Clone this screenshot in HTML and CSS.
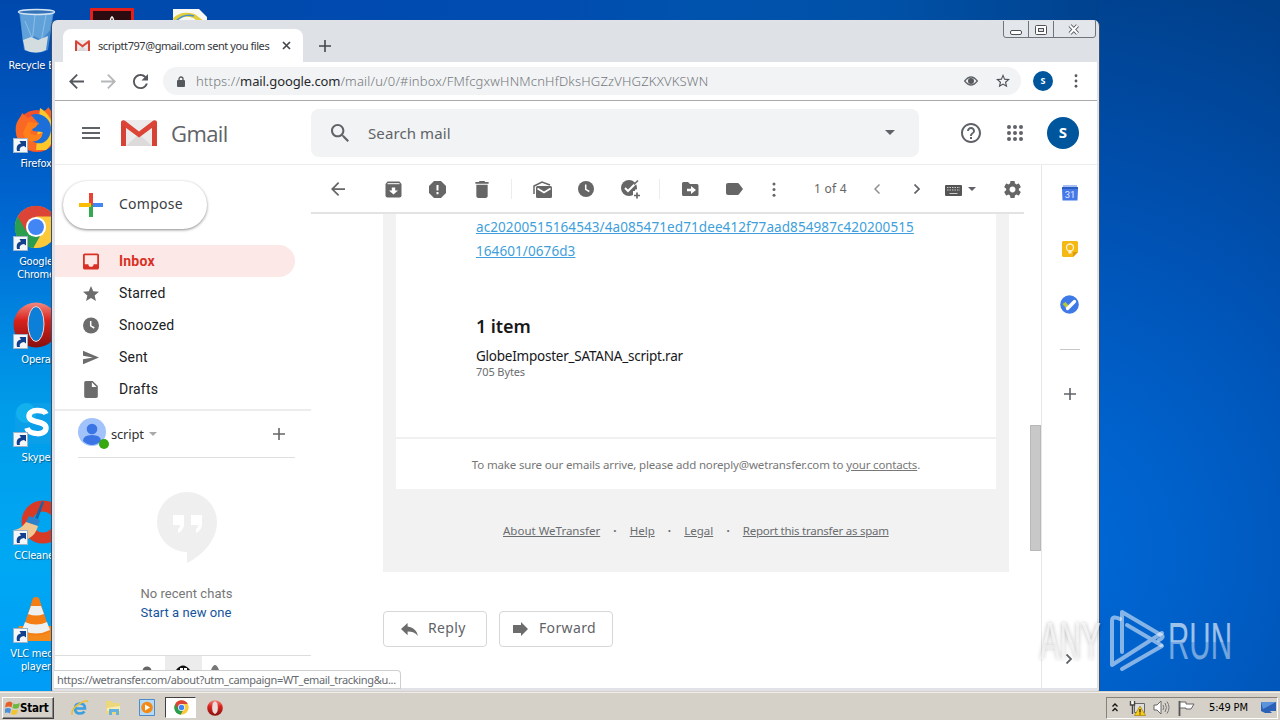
FILE: index.html
```html
<!DOCTYPE html>
<html lang="en">
<head>
<meta charset="utf-8">
<title>Gmail</title>
<link rel="stylesheet" href="styles.css">
</head>
<body>
<svg class="defs" width="0" height="0">
  <symbol id="shortcut" viewBox="0 0 15 15"><rect x=".5" y=".5" width="14" height="14" fill="#f4f7fa" stroke="#9fb3c8"/><path d="M4 13C3 8 5 6 8 5.500L6.500 3H13v6.500L11 8C8 8.500 6 10 7 13z" fill="#12408c"/></symbol>
  <symbol id="chrome" viewBox="0 0 48 48"><circle cx="24" cy="24" r="23" fill="#fbc93a"/><path d="M24 24L4 12.500A23 23 0 0 0 21 47l9-16z" fill="#2a9d4e"/><path d="M4 12.500A23 23 0 0 1 44 12.500H24l-10 17z" fill="#db4437"/><circle cx="24" cy="24" r="11" fill="#fff"/><circle cx="24" cy="24" r="8.700" fill="#4285f4"/></symbol>
  <symbol id="gmail" viewBox="0 0 36 26"><rect width="36" height="26" rx="2" fill="#eceaea"/><path d="M5 26L18 14l13 12z" fill="#dcdada"/><path d="M0 26V2l5 4v20zM36 26V2l-5 4v20z" fill="#d44336"/><path d="M0 2.500C0 .5 2.500-.5 4 .8L18 11.500 32 .8c1.500-1.300 4-.3 4 1.700 0 1-.5 2-1.500 2.700L18 17.500 1.500 5.200C.5 4.500 0 3.500 0 2.500z" fill="#db4437"/></symbol>
  <symbol id="clock" viewBox="0 0 16 16"><circle cx="8" cy="8" r="8" fill="currentColor"/><path d="M7.700 3.500v4.800l3.600 2.200" fill="none" stroke="#fff" stroke-width="1.500"/></symbol>
  <symbol id="plus" viewBox="0 0 12 12"><path d="M6 0v12M0 6h12" stroke="currentColor" stroke-width="1.600"/></symbol>
  <symbol id="back" viewBox="4 4 16 16"><path d="M20 11H7.830l5.590-5.590L12 4l-8 8 8 8 1.410-1.410L7.830 13H20z" fill="currentColor"/></symbol>
  <symbol id="more" viewBox="0 0 4 16"><g fill="currentColor"><circle cx="2" cy="2" r="1.600"/><circle cx="2" cy="8" r="1.600"/><circle cx="2" cy="14" r="1.600"/></g></symbol>
  <symbol id="opera" viewBox="0 0 46 46"><circle cx="23" cy="23" r="22.500" fill="url(#redball)"/><ellipse cx="23" cy="22" rx="8" ry="17.500" fill="var(--hole)" stroke="#f6d5d2" stroke-width="1"/></symbol>
  <linearGradient id="redball" x2="0" y2="1"><stop stop-color="#f08a80"/><stop offset=".4" stop-color="#d8221c"/><stop offset="1" stop-color="#86100e"/></linearGradient>
</svg>

<div class="desktop">
  <div class="shortcut-icon" style="top:7px">
    <svg width="42" height="48" viewBox="0 0 42 48"><path d="M4 4l5 39q12 6 24 0L39 4z" fill="#3f86cf"/><path d="M5 5h33l-3 18-8 10-8-4-11 6z" fill="#6ea9de" opacity=".75"/><path d="M10 14l9 22M20 8l-3 28M31 8l-5 27" stroke="#b9daf2" opacity=".5"/><path d="M8 33l8-3 7 3 10-4-2 14q-10 5-21 0z" fill="#d3dde0"/><ellipse cx="21.500" cy="5" rx="18" ry="2.500" fill="#3472b8" stroke="#d3e5f2" stroke-width="1.400"/></svg>
    <span>Recycle Bin</span>
  </div>
  <div class="shortcut-icon" style="top:105px">
    <svg width="44" height="48" viewBox="0 0 44 48"><circle cx="23" cy="26" r="21" fill="#f2512b"/><path d="M2 28C0 16 8 12 8 8l6 5C22 8 34 6 34 2c10 10 12 36-4 43-14 4-26-4-28-17z" fill="#fa6826"/><path d="M26 3c14 8 20 30 6 42H22z" fill="#ffc82a"/><path d="M17 10c10-4 21 4 20 15S27 42 18 36c8 0 11-5 10-9l-9-1c-2-3 2-5 6-7z" fill="#1c6fd8"/><path d="M14 17l9 1c1 3-2 5-5 6l-2 4c4 4 9 1 13-1-2 12-18 13-20 1z" fill="#ff7f1a"/></svg>
    <svg class="overlay-arrow"><use href="#shortcut"/></svg><span>Firefox</span>
  </div>
  <div class="shortcut-icon" style="top:203px">
    <svg width="44" height="48"><use href="#chrome" y="2" width="44" height="44"/></svg>
    <svg class="overlay-arrow"><use href="#shortcut"/></svg><span>Google Chrome</span>
  </div>
  <div class="shortcut-icon" style="top:301px">
    <svg width="46" height="48"><use href="#opera" y="1" width="46" height="46"/></svg>
    <svg class="overlay-arrow"><use href="#shortcut"/></svg><span>Opera</span>
  </div>
  <div class="shortcut-icon skype" style="top:399px">
    <svg width="44" height="48" viewBox="0 0 44 48"><rect x="1" y="4" width="44" height="41" rx="12" fill="#0b9fea"/><circle cx="12" cy="14" r="10" fill="#13b0ee"/><path d="M32 15c-2-5-17-5-17 2 0 8 17 4 17 12 0 8-17 7-19 0" fill="none" stroke="#fff" stroke-width="5.500"/></svg>
    <svg class="overlay-arrow"><use href="#shortcut"/></svg><span>Skype</span>
  </div>
  <div class="shortcut-icon" style="top:497px">
    <svg width="44" height="48" viewBox="0 0 44 48"><circle cx="29" cy="25" r="16" fill="none" stroke="#d83b25" stroke-width="11"/><path d="M28 4l2 1-6 17-3-1z" fill="#1763ab"/><path d="M15 19l11 4-2 6-12-4z" fill="#2b82cb"/><path d="M12 25l12 4c-2 8-7 12-13 14L0 33c6-1 9-4 12-8z" fill="#f0c792"/></svg>
    <svg class="overlay-arrow"><use href="#shortcut"/></svg><span>CCleaner</span>
  </div>
  <div class="shortcut-icon" style="top:595px">
    <svg width="44" height="48" viewBox="0 0 44 48"><path d="M5 31h34l5 15H1z" fill="#f58a1c"/><path d="M19 3q3-2 6 0l11 34q-14 7-28 0z" fill="#f47d14"/><path d="M17 11h10l3 8q-8 3-16 0zM11 27q11 5 22 0l3 8q-14 7-28 0z" fill="#eef0ef"/></svg>
    <svg class="overlay-arrow"><use href="#shortcut"/></svg><span>VLC media player</span>
  </div>
  <svg class="peek-icons" width="120" height="14" viewBox="0 0 120 14"><rect x="1.500" y="1.500" width="41" height="20" fill="#2c0b10" stroke="#e3211c" stroke-width="3"/><path d="M20 14q1-5 2-5t2 5" fill="none" stroke="#fff" stroke-width="1.500"/><path d="M83 1h26l8 8v5H83z" fill="#f8f8f4"/><path d="M84 12q8-8 20-4l8 6" fill="none" stroke="#e0ce3d" stroke-width="4"/><path d="M86 13q8-8 18-5" fill="none" stroke="#4d8fcb" stroke-width="1.500"/></svg>

  <main class="window">
    <div class="tabstrip">
      <div class="tab">
        <svg class="fav"><use href="#gmail"/></svg>
        <span class="tab-title">scriptt797@gmail.com sent you files</span>
        <svg class="tab-close" width="9" height="9" viewBox="0 0 9 9"><path d="M1 1l7 7M8 1L1 8" stroke="#45494d" stroke-width="1.700"/></svg>
      </div>
      <svg class="new-tab"><use href="#plus"/></svg>
      <svg class="caption" width="94" height="18" viewBox="0 0 94 18"><path d="M.5 0v14q0 2.500 2.500 2.500h87q2.500 0 2.500-2.500V0M25.500 0v16.500M50.500 0v16.500" fill="#e3e6ea" stroke="#70757b"/><rect x="7.500" y="9.500" width="11" height="4" rx="1.500" fill="#fff" stroke="#4d5156"/><rect x="32.500" y="4.500" width="11" height="9" rx="1" fill="#fff" stroke="#4d5156"/><rect x="35.500" y="7.500" width="5" height="3" fill="#ddd" stroke="#4d5156"/><path d="M67 4.500l7.500 8M74.500 4.500l-7.500 8" stroke="#565a60" stroke-width="4"/><path d="M67 4.500l7.500 8M74.500 4.500l-7.500 8" stroke="#fff" stroke-width="2"/></svg>
    </div>
    <div class="browser-bar">
      <svg class="nav"><use href="#back"/></svg>
      <svg class="nav forward"><use href="#back"/></svg>
      <svg class="nav" viewBox="4 4 16 16"><path d="M17.650 6.350C16.200 4.900 14.210 4 12 4c-4.420 0-7.990 3.580-7.990 8s3.570 8 7.990 8c3.730 0 6.840-2.550 7.730-6h-2.080c-.82 2.330-3.040 4-5.650 4-3.310 0-6-2.690-6-6s2.690-6 6-6c1.660 0 3.140.69 4.220 1.780L13 11h7V4l-2.350 2.350z" fill="currentColor"/></svg>
      <div class="omnibox">
        <svg width="8" height="11" viewBox="0 0 8 11"><rect y="4" width="8" height="7" rx="1" fill="#55595e"/><path d="M2 5V3a2 2 0 0 1 4 0v2" fill="none" stroke="#55595e" stroke-width="1.300"/></svg>
        <span class="url">https://<b>mail.google.com</b>/mail/u/0/#inbox/FMfcgxwHNMcnHfDksHGZzVHGZKXVKSWN</span>
        <svg class="eye" width="14" height="10" viewBox="0 0 14 10"><path d="M.7 5Q7-3 13.300 5 7 13 .7 5z" fill="none" stroke="#5f6368" stroke-width="1.400"/><circle cx="7" cy="5" r="3" fill="#55595e"/></svg>
        <svg width="14" height="14" viewBox="2 2 20 20"><path d="M22 9.240l-7.190-.62L12 2 9.190 8.630 2 9.240l5.460 4.730L5.820 21 12 17.270 18.180 21l-1.630-7.030L22 9.240zM12 15.400l-3.760 2.270 1-4.280-3.320-2.880 4.380-.38L12 6.100l1.710 4.040 4.380.38-3.320 2.880 1 4.280L12 15.400z" fill="#4d5156"/></svg>
      </div>
      <div class="avatar small">s</div>
      <svg class="browser-menu"><use href="#more"/></svg>
    </div>

    <header class="gmail-head">
      <svg class="burger" width="18" height="12" viewBox="0 0 18 12"><path d="M0 1h18M0 6h18M0 11h18" stroke="#5f6368" stroke-width="1.800"/></svg>
      <svg class="logo"><use href="#gmail"/></svg>
      <span class="brand">Gmail</span>
      <div class="search">
        <svg width="18" height="18" viewBox="3 3 17.500 17.500"><path d="M15.500 14h-.79l-.28-.27C15.410 12.590 16 11.110 16 9.500 16 5.910 13.090 3 9.500 3S3 5.910 3 9.500 5.910 16 9.500 16c1.610 0 3.090-.59 4.230-1.570l.27.28v.79l5 4.990L20.490 19l-4.990-5zm-6 0C7.010 14 5 11.990 5 9.500S7.010 5 9.500 5 14 7.010 14 9.500 11.990 14 9.500 14z" fill="#5f6368"/></svg>
        <span>Search mail</span>
        <i class="caret"></i>
      </div>
      <svg class="help" width="20" height="20" viewBox="2 2 20 20"><path d="M11 18h2v-2h-2v2zm1-16C6.480 2 2 6.480 2 12s4.480 10 10 10 10-4.480 10-10S17.520 2 12 2zm0 18c-4.410 0-8-3.590-8-8s3.590-8 8-8 8 3.590 8 8-3.590 8-8 8zm0-14c-2.210 0-4 1.790-4 4h2c0-1.100.9-2 2-2s2 .9 2 2c0 2-3 1.750-3 5h2c0-2.250 3-2.500 3-5 0-2.210-1.790-4-4-4z" fill="#5f6368"/></svg>
      <svg class="apps" width="16" height="16" viewBox="0 0 16 16"><g fill="#5f6368"><circle cx="2" cy="2" r="2"/><circle cx="8" cy="2" r="2"/><circle cx="14" cy="2" r="2"/><circle cx="2" cy="8" r="2"/><circle cx="8" cy="8" r="2"/><circle cx="14" cy="8" r="2"/><circle cx="2" cy="14" r="2"/><circle cx="8" cy="14" r="2"/><circle cx="14" cy="14" r="2"/></g></svg>
      <div class="avatar">s</div>
    </header>

    <div class="gmail-body">
      <nav class="sidebar">
        <div class="compose">
          <svg width="24" height="24" viewBox="0 0 24 24"><path d="M10 0h4v12h-4z" fill="#ea4335"/><path d="M10 12h4v12h-4z" fill="#34a853"/><path d="M0 10h12v4H0z" fill="#fbbc04"/><path d="M14 10h10v4H14z" fill="#4285f4"/></svg>
          <span>Compose</span>
        </div>
        <ul class="folders">
          <li class="active"><svg viewBox="3 3 18 18"><path d="M19 3H4.990c-1.110 0-1.980.89-1.980 2L3 19c0 1.100.88 2 1.990 2H19c1.100 0 2-.9 2-2V5c0-1.110-.9-2-2-2zm0 12h-4c0 1.660-1.350 3-3 3s-3-1.340-3-3H4.990V5H19v10z" fill="currentColor"/></svg><span>Inbox</span></li>
          <li><svg viewBox="2 2 20 19"><path d="M12 17.270L18.180 21l-1.640-7.030L22 9.240l-7.190-.61L12 2 9.190 8.630 2 9.240l5.460 4.730L5.820 21z" fill="currentColor"/></svg><span>Starred</span></li>
          <li><svg><use href="#clock"/></svg><span>Snoozed</span></li>
          <li><svg viewBox="2 3 21 18"><path d="M2.010 21L23 12 2.010 3 2 9.800l13 2.200-13 2.200z" fill="currentColor"/></svg><span>Sent</span></li>
          <li><svg viewBox="4 2 16 20"><path d="M6 2c-1.100 0-1.990.9-1.990 2L4 20c0 1.100.89 2 1.990 2H18c1.100 0 2-.9 2-2V8l-6-6H6zm7 7V3.500L18.500 9H13z" fill="currentColor"/></svg><span>Drafts</span></li>
        </ul>
        <div class="chat-user">
          <svg width="32" height="32" viewBox="0 0 32 32"><circle cx="14" cy="14" r="14" fill="#a1c2fa"/><circle cx="14" cy="11" r="5.300" fill="#3b74e4"/><path d="M5 23q0-6 9-6t9 6q-9 8-18 0z" fill="#3b74e4"/><circle cx="26" cy="26" r="5" fill="#34a80e"/></svg>
          <span>script</span><i class="caret grey"></i>
          <svg class="add"><use href="#plus"/></svg>
        </div>
        <div class="hangouts">
          <svg width="60" height="72" viewBox="0 0 60 72"><path d="M30 0a30 30 0 0 1 30 30c0 18-14 33-30 41V60A30 30 0 0 1 30 0z" fill="#efefef"/><path d="M16 23h11v10q-1 6-6 8v-4q2-1 2-4h-7zM34 23h11v10q-1 6-6 8v-4q2-1 2-4h-7z" fill="#fff"/></svg>
          <span class="none">No recent chats</span>
          <span class="start-chat">Start a new one</span>
        </div>
        <div class="side-tabs">
          <svg width="36" height="14"><circle cx="18" cy="15" r="4.500" fill="#666"/></svg>
          <svg class="current" width="37" height="14"><path d="M11 14q7-9 14 0z" fill="#111"/><path d="M15 14v-2h3v2zm4 0v-2h3v2z" fill="#fff"/></svg>
          <svg width="26" height="14"><path d="M9 14q4-10 8 0z" fill="#777"/></svg>
        </div>
      </nav>

      <section class="mail">
        <div class="mail-tools">
          <svg class="t-back" width="14" height="14"><use href="#back"/></svg>
          <svg class="t-archive" width="17" height="17" viewBox="0 0 17 17"><path d="M2.500.5h12l2 2.500v11.500q0 2-2 2h-12q-2 0-2-2V3z" fill="currentColor"/><path d="M2.500 2.700h12" stroke="#fff"/><path d="M6.800 6.500h3.400v3H13L8.500 13.500 4 9.500h2.800z" fill="#fff"/></svg>
          <svg class="t-spam" width="17" height="17" viewBox="0 0 17 17"><path d="M5 0h7l5 5v7l-5 5H5l-5-5V5z" fill="currentColor"/><path d="M8.500 4v5.500M8.500 11v2.200" stroke="#fff" stroke-width="2"/></svg>
          <svg class="t-trash" width="14" height="17" viewBox="5 3 14 18"><path d="M6 19c0 1.100.9 2 2 2h8c1.100 0 2-.9 2-2V7H6v12zM19 4h-3.500l-1-1h-5l-1 1H5v2h14V4z" fill="currentColor"/></svg>
          <i class="sep"></i>
          <svg class="t-unread" width="19" height="17" viewBox="0 0 19 17"><path d="M1 13V5l8-4 8 3" fill="none" stroke="currentColor" stroke-width="1.500"/><rect x="3" y="5" width="16" height="12" rx="1.500" fill="currentColor"/><path d="M4.500 7.500l6.500 4 6.500-4" fill="none" stroke="#fff" stroke-width="1.700"/></svg>
          <svg class="t-snooze" width="16" height="16"><use href="#clock"/></svg>
          <svg class="t-task" width="20" height="19" viewBox="0 0 20 19"><circle cx="8" cy="8" r="8" fill="currentColor"/><path d="M4 8l3 3 9-9" fill="none" stroke="#fff" stroke-width="2"/><path d="M13 4.500L17 .5" stroke="currentColor" stroke-width="1.500"/><path d="M12 13h8M16 9.500v9" stroke="#fff" stroke-width="4"/><path d="M13 15.500h6M16 12.500v6" stroke="currentColor" stroke-width="1.700"/></svg>
          <i class="sep"></i>
          <svg class="t-move" width="17" height="14" viewBox="0 0 17 14"><path d="M1.500 0H6l2 2h7q1.500 0 1.500 1.500v9Q16.500 14 15 14H1.500Q0 14 0 12.500v-11Q0 0 1.500 0z" fill="currentColor"/><path d="M5 6.700h4V4l5 4-5 4V9.300H5z" fill="#fff"/></svg>
          <svg class="t-label" width="17" height="12" viewBox="0 0 17 12"><path d="M2 0h9.500q1 0 1.500.8L17 6l-4 5.200q-.5.800-1.500.800H2q-2 0-2-2V2q0-2 2-2z" fill="currentColor"/></svg>
          <svg class="t-more" width="4" height="15"><use href="#more"/></svg>
          <span class="count">1 of 4</span>
          <svg class="t-prev" width="6" height="10" viewBox="0 0 6 10"><path d="M5.500.5L1 5l4.500 4.500" fill="none" stroke="#8d8f91" stroke-width="1.500"/></svg>
          <svg class="t-next" width="6" height="10" viewBox="0 0 6 10"><path d="M.5.500L5 5 .5 9.500" fill="none" stroke="#5f6368" stroke-width="1.700"/></svg>
          <svg class="t-keys" width="17" height="11" viewBox="0 0 17 11"><rect width="17" height="11" rx="1" fill="#555"/><path d="M2 2.500h13M2 5h13" stroke="#ccc" stroke-width="1" stroke-dasharray="1.500 1"/><path d="M4.500 8.500h8" stroke="#ccc"/></svg>
          <i class="caret keys"></i>
          <svg class="t-gear" width="17" height="17" viewBox="2 2 20 20"><path d="M19.430 12.980c.04-.32.07-.64.07-.98s-.03-.66-.07-.98l2.110-1.650c.19-.15.24-.42.12-.64l-2-3.460c-.12-.22-.39-.3-.61-.22l-2.490 1c-.52-.4-1.080-.73-1.690-.98l-.38-2.650C14.460 2.180 14.250 2 14 2h-4c-.25 0-.46.18-.49.42l-.38 2.650c-.61.25-1.170.59-1.690.98l-2.490-1c-.23-.09-.49 0-.61.22l-2 3.460c-.13.22-.07.49.12.64l2.110 1.650c-.04.32-.07.65-.07.98s.03.66.07.98l-2.110 1.650c-.19.15-.24.42-.12.64l2 3.460c.12.22.39.3.61.22l2.490-1c.52.4 1.080.73 1.690.98l.38 2.650c.03.24.24.42.49.42h4c.25 0 .46-.18.49-.42l.38-2.650c.61-.25 1.170-.59 1.690-.98l2.490 1c.23.09.49 0 .61-.22l2-3.460c.12-.22.07-.49-.12-.64l-2.110-1.650zM12 15.500c-1.930 0-3.500-1.570-3.500-3.500s1.570-3.500 3.500-3.500 3.500 1.570 3.500 3.500-1.570 3.500-3.500 3.500z" fill="currentColor"/></svg>
        </div>
        <div class="scroller">
          <div class="message">
            <div class="panel">
              <div class="card">
                <div class="link"><a class="l1">ac20200515164543/4a085471ed71dee412f77aad854987c420200515</a><br><a class="l2">164601/0676d3</a></div>
                <h2>1 item</h2>
                <p class="file">GlobeImposter_SATANA_script.rar</p>
                <p class="size">705 Bytes</p>
              </div>
              <p class="note"><span>To make sure our emails arrive, please add noreply@wetransfer.com to <u>your contacts</u>.</span></p>
              <div class="foot"><u class="f1">About WeTransfer</u><b>·</b><u class="f2">Help</u><b>·</b><u class="f3">Legal</u><b>·</b><u class="f4">Report this transfer as spam</u></div>
            </div>
            <div class="actions">
              <div class="btn reply"><svg width="17" height="13" viewBox="3 5 18 15" preserveAspectRatio="none"><path d="M10 9V5l-7 7 7 7v-4.100c5 0 8.500 1.600 11 5.100-1-5-4-10-11-11z" fill="#6c6c6c"/></svg><span>Reply</span></div>
              <div class="btn fwd"><svg width="15" height="14" viewBox="0 0 15 14"><path d="M0 3h8V0l7 7-7 7v-3H0z" fill="#6c6c6c"/></svg><span>Forward</span></div>
            </div>
          </div>
          <div class="track"><div class="thumb"></div></div>
        </div>
      </section>

      <aside class="rail">
        <svg width="16" height="18" viewBox="0 0 16 18"><path d="M1 1h14v6H1z" fill="#a7c1f7"/><path d="M0 3h16v3H0z" fill="#2f5cc0"/><path d="M0 5h16l-.5 11.500h-15z" fill="#4679e8"/><text x="8" y="14" text-anchor="middle" font-size="9.500" fill="#e3ecff" font-family="Roboto">31</text></svg>
        <svg class="keep" width="16" height="16" viewBox="0 0 16 16"><path d="M1 0h14l1 1v10l-5 5H1l-1-1V1z" fill="#f4b915"/><path d="M16 11l-5 5v-5z" fill="#e09a0c"/><circle cx="8" cy="6.500" r="3.500" fill="none" stroke="#fff3d2" stroke-width="1.300"/><path d="M6.500 9v3.500h3V9" fill="#fff3d2"/></svg>
        <svg class="tasks" width="19" height="19" viewBox="0 0 19 19"><circle cx="9.500" cy="9.500" r="9.300" fill="#3f79e8"/><path d="M2.500 9l3-2 3 3.500-2 3z" fill="#b6c83c"/><path d="M7.500 13.500l7-7" stroke="#fff" stroke-width="3.300" stroke-linecap="round"/></svg>
        <i class="rail-line"></i>
        <svg class="rail-plus"><use href="#plus"/></svg>
        <svg class="rail-next" width="6" height="10" viewBox="0 0 6 10"><path d="M.5.500L5 5 .5 9.500" fill="none" stroke="#5f6368" stroke-width="1.900"/></svg>
      </aside>
    </div>
    <div class="status">https://wetransfer.com/about?utm_campaign=WT_email_tracking&amp;u...</div>
  </main>

  <svg class="watermark" width="220" height="70" viewBox="0 0 220 70">
    <defs><linearGradient id="wm" x2="0" y2="1"><stop offset=".5" stop-color="#fff" stop-opacity=".62"/><stop offset=".52" stop-color="#fff" stop-opacity=".45"/></linearGradient></defs>
    <g class="wm-text" font-size="51" fill="url(#wm)">
      <text class="wm-shade" x="4" y="53" textLength="61" lengthAdjust="spacingAndGlyphs">ANY</text>
      <text x="132" y="53" textLength="64" lengthAdjust="spacingAndGlyphs">RUN</text>
    </g>
    <g fill="none" stroke="#fff" stroke-opacity=".52" stroke-width="4" stroke-linejoin="round" stroke-linecap="round"><path d="M126 40l-40 23M86 46V6l39 23q4 2-2 5"/><path d="M84 13q-8-4-8 2v44l50-32M91 19l34 20"/></g>
  </svg>

  <footer class="taskbar">
    <div class="start"><svg width="15" height="14" viewBox="0 0 15 14"><path d="M1 2q4-3 6.500 0L6.500 6.500Q4 4.500 0 6.500z" fill="#e4602b"/><path d="M8.500 2.500Q11 4 15 2l-1.500 5q-3 1.500-6 0z" fill="#6cb840"/><path d="M0 8q3-2 6 0l-1 4.500Q2 10.500-1 12.500z" fill="#4a91d8"/><path d="M7 8.500q3 1.500 6 0l-1.300 4.500q-3 1.500-5.700 0z" fill="#f3c32d"/></svg><span>Start</span></div>
    <svg class="q1" width="18" height="18" viewBox="0 0 18 18"><path d="M4 9.500h10q0-5-5-5t-5 5 5 5q3 0 4.500-2" fill="none" stroke="#3b9fe0" stroke-width="2.600"/><path d="M1 16Q0 10 8 5t9-2" fill="none" stroke="#e6c23c" stroke-width="1.500"/></svg>
    <svg class="q2" width="17" height="16" viewBox="0 0 17 16"><path d="M1 1h6l1 2h7v11H1z" fill="#edd77b"/><path d="M2 8l13-2v5H2z" fill="#f8eeb5"/><path d="M4 15V9h10v6h-3v-3H7v3z" fill="#65b2df"/></svg>
    <svg class="q3" width="17" height="17" viewBox="0 0 17 17"><path d="M.5.500h15v16H.5z" fill="#b6d9f5" stroke="#4e8cc9"/><circle cx="8" cy="8.500" r="5.800" fill="#f28a18"/><path d="M6 5.500l5 3-5 3z" fill="#fff"/></svg>
    <div class="q4"><svg width="15" height="15"><use href="#chrome"/></svg></div>
    <svg class="q5" width="16" height="16"><use href="#opera"/></svg>
    <div class="tray">
      <svg class="y1" width="6" height="9" viewBox="0 0 6 9"><path d="M.5 3.500L3 1l2.500 2.500M.5 8L3 5.500 5.500 8" fill="none" stroke="#111" stroke-width="1.300"/></svg>
      <svg class="y2" width="17" height="16" viewBox="0 0 17 16"><path d="M5.500 3.500h10v9h-10z" fill="#ddd" stroke="#666"/><path d="M1.500 1v4h4V1M3.500 5v9" fill="#fff" stroke="#444" stroke-width="1.400"/><path d="M11 6l5.500 9.500h-11z" fill="#f7cb18" stroke="#a87e00" stroke-width=".7"/><path d="M11 9v3.500M11 13.500v1" stroke="#222" stroke-width="1.300"/></svg>
      <svg class="y3" width="17" height="15" viewBox="0 0 17 15"><path d="M1 5h3l4-4v13l-4-4H1z" fill="#fff" stroke="#666"/><path d="M10 5q1.500 2.500 0 5M12 3q3 4.500 0 9M14 1.500q4 6 0 12" fill="none" stroke="#777"/></svg>
      <svg class="y4" width="17" height="16" viewBox="0 0 17 16"><path d="M1.500 1v15" stroke="#555" stroke-width="1.800"/><path d="M2 2h6v2h8l-3 5H8V8H2z" fill="#fff" stroke="#666"/></svg>
      <span>5:49 PM</span>
      <svg class="y5" width="15" height="11" viewBox="0 0 15 11"><path d="M0 0h15v9H9l2 2H4L0 9z" fill="#2b62b8"/><path d="M0 0h15L2 7z" fill="#5d93db"/></svg>
    </div>
  </footer>
</div>
</body>
</html>
```
FILE: styles.css
```css
* { box-sizing: border-box; }
body { margin: 0; font-family: "Noto Sans", sans-serif; }
svg { display: block; flex: none; }
p, h2, ul { margin: 0; padding: 0; }
.defs { position: absolute; }

.desktop {
  position: relative; width: 1280px; height: 720px; overflow: hidden;
  background:
    linear-gradient(180deg, #0048ac 0, #0055bd 110px, #0068d2 220px, #0085e0 320px, #009ce9 410px, #00a8f3 560px, #009cf6 690px) 0 0 / 54px 694px no-repeat,
    linear-gradient(90deg, #0048ac 0, #004cb0 550px, #0053ad 700px, #0050a6 900px, #00428e 1099px) 0 0 / 1099px 22px no-repeat,
    radial-gradient(circle 600px at 1030px 550px, #006ad9 0, #0061cb 25%, #0050b0 60%, #003f89 100%);
}

.shortcut-icon { position: absolute; left: -1px; width: 74px; display: flex; flex-direction: column; align-items: center; --hole: #0c7fd8; }
.shortcut-icon span { width: 66px; margin-top: 4px; color: #fff; font: 11px/13px "DejaVu Sans Condensed", sans-serif; letter-spacing: -.2px; text-align: center; text-shadow: 1px 1px 1px #0006; }
.overlay-arrow { position: absolute; left: 14px; top: 33px; width: 15px; height: 15px; }
.peek-icons { position: absolute; left: 90px; top: 8px; }

.window {
  position: absolute; left: 51px; top: 20px; width: 1049px; height: 672px; display: flex; flex-direction: column;
  padding: 1px 2px 3px 3px; background: #e0e2e7; border: solid #34506b; border-width: 0 1px 1px; border-radius: 6px 6px 2px 2px; overflow: hidden;
}
.tabstrip { height: 41px; flex: none; display: flex; background: #dee1e6; }
.tab { width: 240px; height: 33px; margin: 8px 0 0 8px; display: flex; align-items: center; padding: 0 12px; background: #fff; border-radius: 8px 8px 0 0; }
.fav { width: 15px; height: 11px; }
.tab-title { width: 177px; margin-left: 8px; font: 11px/16px "Noto Sans", sans-serif; letter-spacing: -.43px; color: #35383b; white-space: nowrap; overflow: hidden; }
.tab-close { margin-left: 8px; }
.new-tab { width: 12px; height: 12px; margin: 19px 0 0 16px; color: #44474b; }
.caption { margin-left: auto; }
.browser-bar { height: 39px; flex: none; display: flex; align-items: center; padding-left: 14px; background: #fff; border-bottom: 1px solid #a9aaab; color: #55595e; }
.nav { width: 15px; height: 15px; margin-right: 17px; }
.nav.forward { transform: scaleX(-1); color: #b5b7b9; }
.omnibox { width: 858px; height: 28px; margin-left: -2px; display: flex; align-items: center; padding: 0 11px 0 14px; background: #f1f3f4; border-radius: 14px; }
.url { margin-left: 11px; font-size: 13px; line-height: 20px; font-weight: 300; letter-spacing: .18px; color: #74787c; white-space: nowrap; }
.url b { font-weight: 400; letter-spacing: -.1px; color: #27292c; }
.eye { margin: 0 18px 0 auto; }
.avatar { width: 32px; height: 32px; border-radius: 50%; background: #00569c; color: #fff; font: bold 15px/31px "Noto Sans", sans-serif; text-align: center; text-transform: uppercase; }
.avatar.small { width: 20px; height: 20px; margin-left: 12px; font-size: 9px; line-height: 20px; }
.browser-menu { width: 4px; height: 14px; margin-left: 21px; }

.gmail-head { height: 64px; flex: none; display: flex; align-items: center; padding-left: 27px; background: #fff; border-bottom: 1px solid #ededed; }
.logo { width: 36px; height: 26px; margin-left: 21px; }
.brand { width: 60px; margin-left: 14px; font: 22px/28px "Open Sans", sans-serif; letter-spacing: -.6px; color: #5f6368; }
.search { width: 608px; height: 48px; margin-left: 80px; display: flex; align-items: center; padding: 0 24px 0 20px; border-radius: 8px; background: #f1f3f4; font-size: 15px; color: #5f6368; }
.search span { margin-left: 19px; letter-spacing: .1px; }
.caret { width: 0; height: 0; border: 5px solid transparent; border-top-color: #5f6368; border-bottom: 0; }
.search .caret { margin-left: auto; }
.help { margin-left: 42px; }
.apps { margin-left: 26px; }
.gmail-head .avatar { margin-left: 24px; }

.gmail-body { flex: 1; min-height: 0; display: flex; background: #fff; }
.sidebar { width: 256px; display: flex; flex-direction: column; }
.compose { width: 144px; height: 48px; margin: 16px 0 0 8px; flex: none; display: flex; align-items: center; padding-left: 16px; border-radius: 24px; box-shadow: 0 1px 3px #0007; font-size: 14px; line-height: 18px; letter-spacing: .25px; color: #3c4043; }
.compose span { margin: -2px 0 0 16px; }
.folders { list-style: none; margin-top: 16px; padding-bottom: 4px; border-bottom: 2px solid #ececec; }
.folders li { width: 240px; height: 32px; display: flex; align-items: center; padding-left: 28px; border-radius: 0 16px 16px 0; font: 14px/20px Roboto, sans-serif; letter-spacing: .2px; color: #202124; }
.folders svg { width: 16px; height: 17px; color: #6c6c6c; }
.folders span { margin-left: 20px; }
.folders .active { background: #fce8e6; color: #d93025; font-weight: 700; }
.folders .active svg { color: #d93025; }
.chat-user { height: 48px; margin: -1px 16px 0 23px; flex: none; display: flex; align-items: center; border-bottom: 1px solid #dedede; font: 13px/18px "Noto Sans", sans-serif; letter-spacing: -.2px; color: #333; }
.chat-user span { margin-left: 1px; }
.caret.grey { border-width: 4px 4px 0; border-top-color: #aaa; margin-left: 5px; }
.add { width: 12px; height: 12px; margin: 0 10px 0 auto; color: #666; }
.hangouts { flex: 1; display: flex; flex-direction: column; align-items: center; padding-top: 34px; font: 13px/19px Roboto, sans-serif; letter-spacing: .05px; }
.hangouts svg { margin: 0 0 20px 8px; }
.none { color: #777; margin-left: 7px; }
.start-chat { color: #15539e; margin-left: 6px; }
.side-tabs { height: 33px; flex: none; display: flex; border-top: 1px solid #ddd; padding-left: 74px; }
.side-tabs .current { background: #ececec; }

.mail { width: 730px; display: flex; flex-direction: column; }
.mail-tools { position: relative; width: 713px; height: 49px; flex: none; display: flex; align-items: center; padding: 1px 0 0 20px; border-bottom: 2px solid #e3e3e3; color: #666; }
.sep { width: 1px; height: 20px; background: #ececec; margin-left: 22px; }
.t-archive { margin-left: 40px; } .t-spam { margin-left: 27px; } .t-trash { margin-left: 29px; }
.t-unread { margin-left: 21px; } .t-snooze { margin-left: 26px; } .t-task { margin-left: 27px; }
.t-task + .sep { margin-left: 18px; }
.t-move { margin-left: 22px; } .t-label { margin-left: 27px; } .t-more { margin-left: 29px; }
.count { width: 34px; margin-left: 38px; font: 12px/16px "Noto Sans", sans-serif; letter-spacing: .25px; white-space: nowrap; }
.t-prev { margin-left: 26px; } .t-next { margin-left: 34px; } .t-keys { margin-left: 25px; margin-top: 3px; }
.caret.keys { margin-left: 6px; border-width: 4px 4px 0; }
.t-gear { margin-left: 28px; }
.scroller { flex: 1; min-height: 0; display: flex; margin-top: -1px; }
.message { width: 626px; margin-left: 72px; }
.panel { height: 359px; padding: 0 13px; background: #f2f2f2; }
.card { height: 226px; padding: 2px 80px 0; background: #fff; border-bottom: 2px solid #f0f0f0; }
.mail-tools { z-index: 1; background: linear-gradient(#fff, #fff) padding-box; }
.link { font-size: 13.5px; line-height: 24px; color: #409fdb; white-space: nowrap; }
.link a { text-decoration: underline; letter-spacing: .09px; }
.card h2 { margin-top: 50px; font-size: 18px; line-height: 26px; font-weight: 600; letter-spacing: -.1px; color: #17181a; }
.file { margin-top: 8px; font-size: 13.5px; line-height: 18px; letter-spacing: -.23px; color: #17181a; }
.size { font-size: 11px; line-height: 14px; letter-spacing: -.1px; color: #6a6d70; }
.note { height: 50px; display: flex; justify-content: center; align-items: center; background: #fff; font-size: 11.5px; letter-spacing: -.155px; color: #777; white-space: nowrap; }
.foot { display: flex; align-items: center; padding: 33px 0 0 107px; font-size: 11.5px; line-height: 18px; color: #6a6d70; white-space: nowrap; }
.foot b { width: 29.500px; text-align: center; }
.f4 { letter-spacing: -.25px; }
.actions { display: flex; gap: 12px; margin-top: 39px; }
.btn { height: 36px; display: flex; align-items: center; border: 1px solid #d6d7d9; border-radius: 4px; font-size: 14px; line-height: 18px; letter-spacing: .35px; color: #5f6368; }
.btn span { margin-top: -2px; }
.reply { width: 104px; padding-left: 17px; } .reply span { margin-left: 10px; }
.fwd { width: 114px; padding-left: 13px; } .fwd span { margin-left: 11px; }
.track { margin-left: 21px; width: 11px; padding-top: 212px; }
.thumb { height: 126px; background: #c8c8c8; border: 1px solid #b8b8b8; }

.rail { width: 56px; border-left: 1px solid #e7e7e7; display: flex; flex-direction: column; align-items: center; padding-top: 19px; color: #5f6368; }
.keep { margin-top: 39px; } .tasks { margin-top: 38px; }
.rail-line { width: 20px; height: 1px; margin-top: 35px; background: #c6c8ca; }
.rail-plus { width: 12px; height: 12px; margin-top: 38px; }
.rail-next { margin: auto 2px 24px 0; }

.status { position: absolute; left: 2px; bottom: 2px; width: 347px; height: 19px; padding-left: 3px; background: #fff; border: 1px solid #cfcfcf; border-left: 0; border-radius: 0 4px 0 0; font-size: 11px; line-height: 17px; letter-spacing: -.33px; color: #66696d; white-space: nowrap; }

.watermark { position: absolute; left: 1036px; top: 606px; }
.wm-text { font-family: "Liberation Sans Narrow", "Liberation Sans", sans-serif; }
.wm-shade { filter: drop-shadow(0 0 2px #0007); }

.taskbar { position: absolute; left: 0; bottom: 0; width: 1280px; height: 28px; display: flex; align-items: center; padding: 2px 2px 0; background: #d5d0c8; border-top: 1px solid #f0eeea; box-shadow: 0 -1px #d5d0c8; }
.start { width: 52px; height: 22px; display: flex; align-items: center; padding-left: 2px; border: 1px solid; border-color: #fff #404040 #404040 #fff; box-shadow: inset -1px -1px #888; font: bold 11.5px/16px "DejaVu Sans Condensed", sans-serif; letter-spacing: -.2px; }
.q1 { margin-left: 17px; } .q2 { margin-left: 16px; } .q3 { margin-left: 17px; }
.q4 { width: 31px; height: 21px; margin-left: 9px; padding: 2px 0 0 8px; background: #fff; border: 1px solid; border-color: #404040 #fff #fff #404040; }
.q5 { margin-left: 11px; --hole: #e9dddd; }
.tray { width: 172px; height: 22px; margin-left: auto; display: flex; align-items: center; padding-left: 5px; border: 1px solid; border-color: #868279 #fff #fff #868279; font: 11px/16px "DejaVu Sans Condensed", sans-serif; letter-spacing: -.15px; }
.y2 { margin-left: 11px; } .y3 { margin-left: 7px; } .y4 { margin-left: 8px; }
.tray span { width: 43px; margin-left: 14px; white-space: nowrap; } .y5 { margin-left: 9px; }
```
